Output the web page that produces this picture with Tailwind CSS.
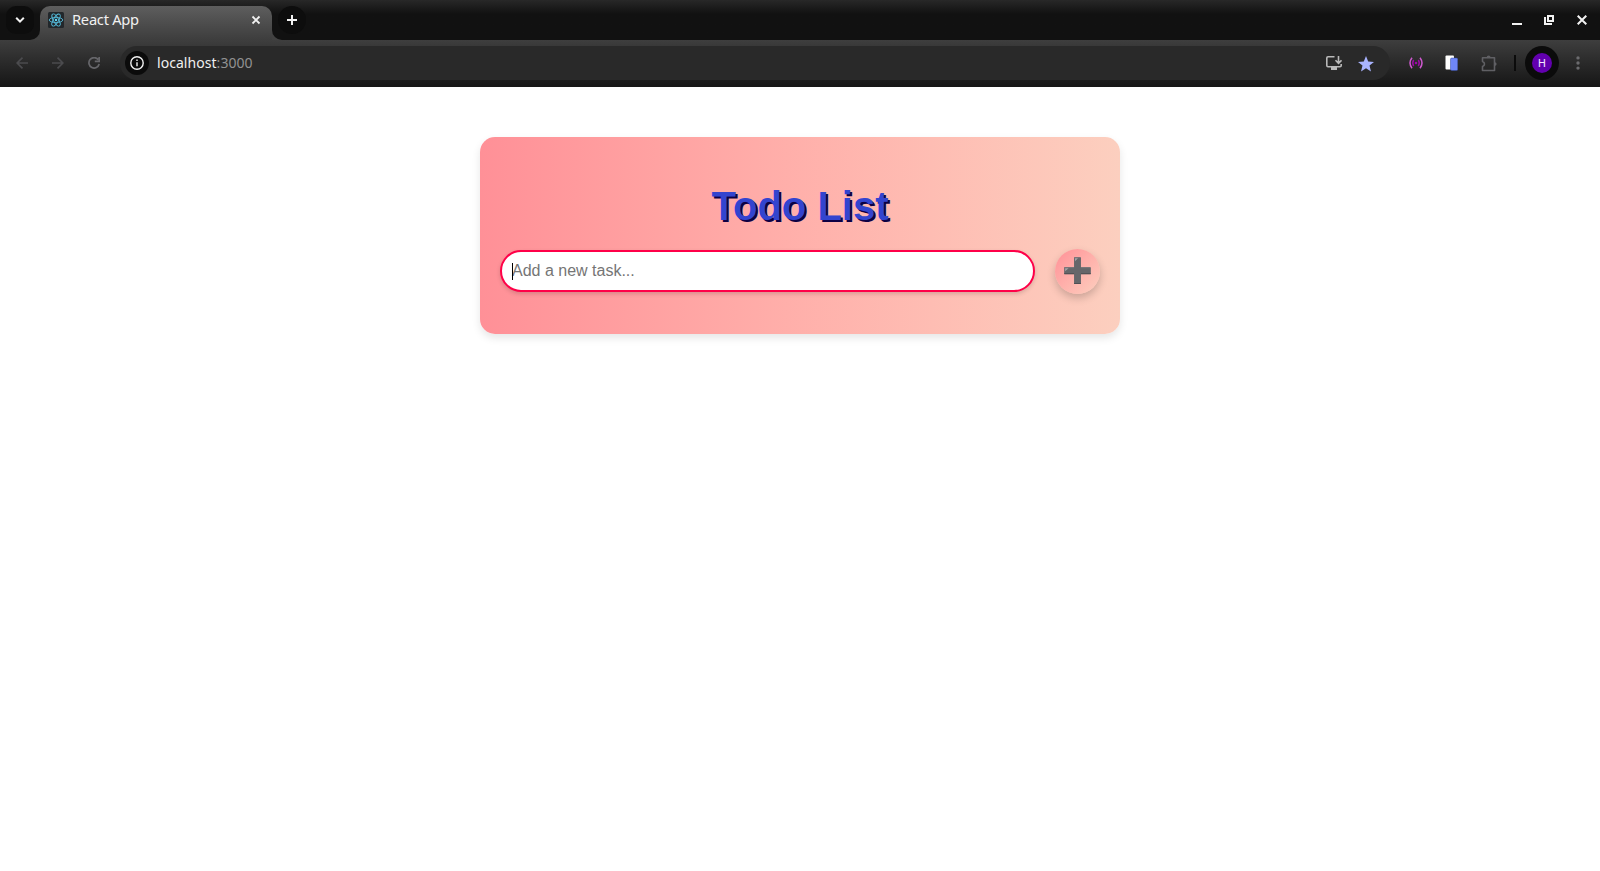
<!DOCTYPE html>
<html lang="en">
<head>
<meta charset="utf-8">
<title>React App</title>
<script src="https://cdn.jsdelivr.net/npm/@tailwindcss/browser@4"></script>
</head>
<body class="bg-white h-[871px] overflow-hidden">
<header class="font-['Noto_Sans',sans-serif]">
  <div class="h-10 flex items-start bg-linear-to-b from-[#282828] to-[#111111] to-[14px]">
    <div class="relative w-10 h-10 shrink-0 pl-1.5 pt-1.5">
      <div class="w-7 h-7 rounded-[10px] bg-[#0d0d0d] flex items-center justify-center">
        <svg width="10" height="8" viewBox="0 0 10 8" fill="none" stroke="#f2f2f2" stroke-width="2"><path d="M1.2 1.8L5 5.6l3.8-3.8"/></svg>
      </div>
      <svg class="absolute right-0 bottom-0" width="10" height="10"><path d="M10 0v10H0A10 10 0 0 0 10 0z" fill="#414141"/></svg>
    </div>
    <div class="mt-1.5 h-[34px] w-[232px] shrink-0 rounded-t-[10px] bg-linear-to-b from-[#5e5e5e] to-[#3d3d3d] flex items-center pl-2 pr-[11px] pb-[6px]">
      <svg width="16" height="16" viewBox="0 0 16 16" fill="none" stroke="#54b9d8" stroke-width=".9"><rect width="16" height="16" rx="1.5" fill="#22272b" stroke="none"/><g transform="rotate(30 8 8)"><ellipse cx="8" cy="8" rx="6.8" ry="2.6" transform="rotate(-30 8 8)"/><ellipse cx="8" cy="8" rx="6.8" ry="2.6" transform="rotate(30 8 8)"/><ellipse cx="8" cy="8" rx="6.8" ry="2.6" transform="rotate(90 8 8)"/></g><circle cx="8" cy="8" r="1.2" fill="#61dafb" stroke="none"/></svg>
      <span class="ml-2 -mt-0.5 text-[14.67px] tracking-[-0.25px] leading-5 text-[#f2f2f2] grow">React App</span>
      <svg width="10" height="10" viewBox="0 0 10 10" stroke="#f2f2f2" stroke-width="1.8"><path d="M1.5 1.5l7 7M8.500 1.500l-7 7"/></svg>
    </div>
    <div class="relative h-10 grow pt-1.5 pl-1.5">
      <div class="w-7 h-7 rounded-full bg-[#0d0d0d] flex items-center justify-center">
        <svg width="10" height="10" viewBox="0 0 10 10" stroke="#f2f2f2" stroke-width="2"><path d="M5 0v10M0 5h10"/></svg>
      </div>
      <svg class="absolute left-0 bottom-0" width="10" height="10"><path d="M0 0v10h10A10 10 0 0 1 0 0z" fill="#414141"/></svg>
    </div>
    <div class="flex items-center h-10 pr-[13px]">
      <svg class="mr-[22px]" width="10" height="10" viewBox="0 0 10 10"><path d="M0 8h10v2H0z" fill="#f2f2f2"/></svg>
      <svg class="mr-[23px]" width="10" height="10" viewBox="0 0 10 10" fill="none" stroke="#f2f2f2" stroke-width="2"><path d="M4 1h5v5H4z"/><path d="M1 2v7h7"/></svg>
      <svg width="10" height="10" viewBox="0 0 10 10" stroke="#f2f2f2" stroke-width="2"><path d="M.7.7l8.600 8.600M9.300.7L.7 9.300"/></svg>
    </div>
  </div>
  <div class="h-[47px] flex items-center bg-linear-to-b from-[#3e3e3e] to-[#161616] pb-[1px]">
    <svg class="ml-4" width="12" height="12" viewBox="0 0 12 12" fill="none" stroke="#4b4b4e" stroke-width="1.7"><path d="M12 6H1.200M6.500.6L1.100 6l5.400 5.400"/></svg>
    <svg class="ml-6" width="12" height="12" viewBox="0 0 12 12" fill="none" stroke="#4b4b4e" stroke-width="1.700"><path d="M0 6h10.800M5.500.6L10.900 6l-5.400 5.400"/></svg>
    <svg class="ml-6" width="12" height="12" viewBox="0 0 12 12" fill="none" stroke="#66666a" stroke-width="1.700"><path d="M10.200 2.600A5.200 5.200 0 1 0 11.200 7M11.200 0v4.300H6.800"/></svg>
    <div class="ml-5 w-[1270px] h-[34px] rounded-full bg-[#292929] flex items-center pl-[5px]">
      <div class="w-6 h-6 rounded-full bg-[#0b0b0b] flex items-center justify-center">
        <svg width="14" height="14" viewBox="0 0 14 14" fill="none" stroke="#f2f2f2" stroke-width="1.400"><circle cx="7" cy="7" r="6.200"/><path d="M7 6.200v4M7 3.400v1.600"/></svg>
      </div>
      <span class="ml-2 text-[14px] tracking-[0.05px] leading-5 text-[#f0f0f0] grow">localhost<span class="text-[#929292]">:3000</span></span>
      <svg width="16" height="14" viewBox="0 0 16 14" fill="none" stroke="#b9b9b9" stroke-width="1.600"><path d="M8.500.8H2Q.8.800.8 2v7.600q0 1.200 1.200 1.200h12q1.200 0 1.200-1.200V8M12.500 0v7M9.500 4.300l3 3 3-3"/><path d="M5 10.500h6V14H5z" fill="#b9b9b9" stroke="none"/></svg>
      <svg class="ml-[16px] mr-[16px] mt-[1px]" width="16" height="16" viewBox="0 0 16 16" fill="#a8b3ff"><path d="M8 0l2.200 5.500 5.800.4-4.500 3.700L13 15.400 8 12.200 3 15.400l1.500-5.800L0 5.900l5.800-.4z"/></svg>
    </div>
    <svg class="ml-[19px]" width="14" height="12" viewBox="0 0 14 12" fill="none" stroke-width="1.500"><path d="M3 .8Q-1 6 3 11.200M11 .8Q15 6 11 11.200" stroke="#cf59cf"/><path d="M4.700 3Q2.700 6 4.700 9M9.300 3Q11.300 6 9.300 9" stroke="#9c0aa6"/><circle cx="7" cy="6" r="1.300" fill="#9c0aa6"/></svg>
    <svg class="ml-[22px]" width="13" height="16" viewBox="0 0 13 16"><rect x=".5" y=".5" width="8.500" height="14" rx="1" fill="#fff"/><rect x="5.500" y="3" width="7.200" height="12.500" rx="1.300" fill="#6f87f8" stroke="#344a9b" stroke-width=".5"/></svg>
    <svg class="ml-[23px]" width="17" height="17" viewBox="0 0 17 17" fill="none" stroke="#606064" stroke-width="1.600"><path d="M13.500 2.800h-12v3.800Q3.500 7.300 3.500 9t-2 2.500v4h12z" stroke-linejoin="round"/><path d="M5.600 2.500a2 2 0 0 1 4 0zM13.800 7.300a1.700 1.700 0 0 1 0 3.600z" fill="#606064" stroke="none"/></svg>
    <div class="ml-4 w-0.5 h-4 bg-[#0b0b0b]"></div>
    <div class="ml-[9px] w-[34px] h-[34px] rounded-full bg-[#0b0b0b] flex items-center justify-center">
      <div class="w-5 h-5 rounded-full bg-[#6200ae] text-[#f5e8ff] text-[11px] leading-[21px] text-center font-['Roboto',sans-serif]">H</div>
    </div>
    <svg class="ml-[17px]" width="4" height="14" viewBox="0 0 4 14" fill="#6b6b6e"><circle cx="2" cy="1.900" r="1.700"/><circle cx="2" cy="7" r="1.700"/><circle cx="2" cy="12.100" r="1.700"/></svg>
  </div>
</header>
<main class="mt-[50px] mx-auto w-[640px] h-[197px] rounded-[15px] px-5 pt-[46px] bg-linear-to-r from-[#ff9097] to-[#fccfbf] shadow-[0_4px_8px_rgba(0,0,0,0.1)] font-['Liberation_Sans',Arial,sans-serif]">
  <h1 class="text-center text-[40px] leading-[46px] font-bold text-[#3344cf] [text-shadow:2px_2px_0_#0c0044]">Todo List</h1>
  <div class="flex items-start mt-5">
    <div class="relative mt-[1px] w-[535px] h-[42px] rounded-[21px] border-2 border-[#ff0048] bg-white shadow-[0_2px_4px_rgba(0,0,0,0.15)] pl-[10px] text-base leading-[37px] text-[#757575]">Add a new task...<span class="absolute left-[10px] top-[11px] w-px h-[17px] bg-black"></span></div>
    <button class="ml-5 w-[45px] h-[45px] rounded-full bg-linear-to-br from-[#ff9097] to-[#fccfbf] shadow-[0_4px_8px_rgba(0,0,0,0.2)] flex items-center justify-center" aria-label="Add task">
      <svg class="-mt-[2px]" width="27" height="27" viewBox="0 -.35 27 27.350"><path d="M10.500 0h6q.5 0 .5.500V10h9.500q.5 0 .5.500v6q0 .5-.5.500H17v9.500q0 .5-.5.500h-6q-.5 0-.5-.5V17H.5q-.5 0-.5-.5v-6q0-.5.5-.5H10V.5q0-.5.5-.5z" fill="#66666a"/><path d="M10 .5h6.500M0 10.500h10M17 10.500h9.500" stroke="#77767a"/><path d="M10 16.500H0M17 16.500h10M10 26.500h7" stroke="#505054"/><path d="M11 4l3-3h-3zM1 14l3.500-3H1z" fill="#a5a5a7"/></svg>
    </button>
  </div>
</main>
</body>
</html>
